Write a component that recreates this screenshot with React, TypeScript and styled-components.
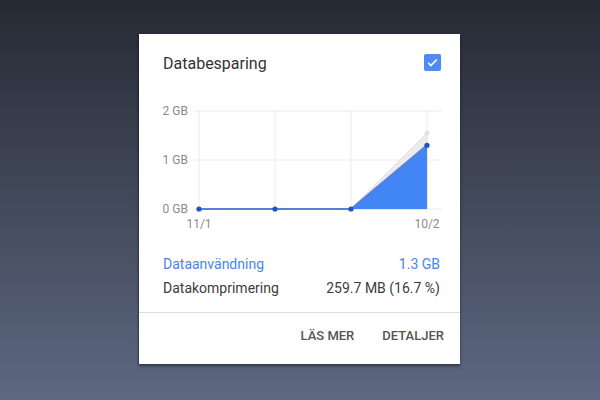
import React from "react";
import styled, { createGlobalStyle } from "styled-components";

const GlobalStyle = createGlobalStyle`
  html, body {
    margin: 0;
    padding: 0;
    height: 100%;
  }
  body {
    font-family: Roboto, "Noto Sans", sans-serif;
    background: linear-gradient(to bottom, #262a34 0%, #3f4656 45%, #5d6882 100%);
  }
  #root {
    height: 100%;
  }
`;

// chart geometry, in svg-local coordinates
const X = [60, 136, 212, 288];
const BASE = 109;
const PER_GB = 49;
const usage = [0, 0, 0, 1.3];
const original = [0, 0, 0, 1.55];

const yOf = (gb: number) => BASE - gb * PER_GB;

const Page = styled.div`
  height: 100%;
  display: flex;
  justify-content: center;
  padding-top: 34px;
  padding-right: 1px;
  box-sizing: border-box;
`;

const Card = styled.div`
  width: 321px;
  height: 330px;
  background: #fff;
  box-shadow: 0 2px 3px rgba(0, 0, 0, 0.45), -1px 0 1px rgba(0, 0, 0, 0.15);
  display: flex;
  flex-direction: column;
`;

const Header = styled.div`
  display: flex;
  align-items: center;
  justify-content: space-between;
  height: 20px;
  padding: 20px 19px 0 24px;
`;

const Title = styled.div`
  font-size: 16px;
  color: #333;
  line-height: 20px;
`;

const Check = styled.div`
  width: 17px;
  height: 17px;
  border-radius: 2px;
  background: #4f8af5;
  display: flex;
  align-items: center;
  justify-content: center;
  margin-top: -3px;
`;

const Chart = styled.svg`
  display: block;
  margin-top: 26px;
`;

const Stats = styled.div`
  margin-top: 17px;
  padding: 0 20px 12px 24px;
  border-bottom: 1px solid #dcdcdc;
`;

const StatRow = styled.div<{ $accent?: boolean }>`
  display: flex;
  justify-content: space-between;
  font-size: 14px;
  line-height: 24px;
  color: ${(p) => (p.$accent ? "#4a84f2" : "#3c3c3c")};
`;

const Footer = styled.div`
  display: flex;
  justify-content: flex-end;
  gap: 28px;
  padding: 14px 16px 0 0;
`;

const TextButton = styled.button`
  border: none;
  background: none;
  padding: 0;
  font-family: Roboto, sans-serif;
  font-weight: 500;
  font-size: 13px;
  line-height: 18px;
  color: #555;
  text-transform: uppercase;
  cursor: pointer;
`;

const UsageChart: React.FC = () => {
  const linePts = X.map((x, i) => `${x},${yOf(usage[i])}`).join(" ");
  return (
    <Chart width={321} height={135} viewBox="0 0 321 135">
      {[0, 1, 2].map((gb) => (
        <g key={gb}>
          <line x1={54} x2={303} y1={yOf(gb)} y2={yOf(gb)} stroke="#ececec" strokeWidth={1} />
          <text x={49} y={yOf(gb) + 4} textAnchor="end" fontSize={12} fill="#8a8a8a" fontFamily="Roboto, sans-serif">
            {gb} GB
          </text>
        </g>
      ))}
      {X.map((x) => (
        <line key={x} x1={x} x2={x} y1={yOf(2)} y2={BASE + 4} stroke="#ececec" strokeWidth={1} />
      ))}
      <polygon
        points={`${X[2]},${BASE} ${X[3]},${yOf(original[3])} ${X[3]},${BASE}`}
        fill="#ebebeb"
        stroke="#e0e0e0"
        strokeWidth={1}
      />
      <polygon points={`${X[2]},${BASE} ${X[3]},${yOf(usage[3])} ${X[3]},${BASE}`} fill="#4285f4" />
      <polyline points={linePts} fill="none" stroke="#5a7fd6" strokeWidth={2} />
      <circle cx={X[3]} cy={yOf(original[3])} r={2.5} fill="#e2e2e2" />
      {X.map((x, i) => (
        <circle key={x} cx={x} cy={yOf(usage[i])} r={2.6} fill="#1f52c4" />
      ))}
      <text x={X[0]} y={128} textAnchor="middle" fontSize={12} fill="#8a8a8a" fontFamily="Roboto, sans-serif">
        11/1
      </text>
      <text x={X[3]} y={128} textAnchor="middle" fontSize={12} fill="#8a8a8a" fontFamily="Roboto, sans-serif">
        10/2
      </text>
    </Chart>
  );
};

const App: React.FC = () => {
  return (
    <>
      <GlobalStyle />
      <Page>
        <Card>
          <Header>
            <Title>Databesparing</Title>
            <Check>
              <svg width="13" height="13" viewBox="0 0 24 24">
                <path d="M4 12.5l5 5L20 6.5" fill="none" stroke="#fff" strokeWidth={3} />
              </svg>
            </Check>
          </Header>
          <UsageChart />
          <Stats>
            <StatRow $accent>
              <span>Dataanvändning</span>
              <span>1.3 GB</span>
            </StatRow>
            <StatRow>
              <span>Datakomprimering</span>
              <span>259.7 MB (16.7 %)</span>
            </StatRow>
          </Stats>
          <Footer>
            <TextButton>Läs mer</TextButton>
            <TextButton>Detaljer</TextButton>
          </Footer>
        </Card>
      </Page>
    </>
  );
};

export default App;
